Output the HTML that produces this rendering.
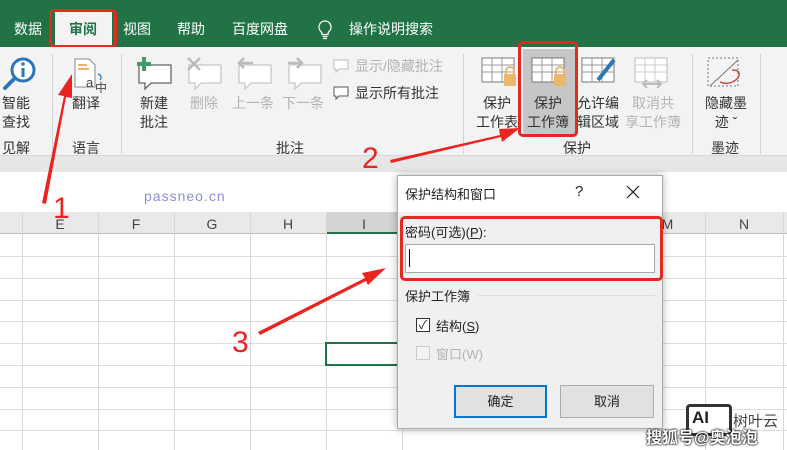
<!DOCTYPE html>
<html><head><meta charset="utf-8"><style>
*{margin:0;padding:0;box-sizing:border-box}
body{width:787px;height:450px;overflow:hidden;position:relative;background:#fff;font-family:"Liberation Sans","Noto Sans CJK SC",sans-serif;font-size:13px;color:#222}
.a{position:absolute;white-space:nowrap}
.tab{color:#fff;font-size:14px;top:19px}
.lbl{font-size:14px;color:#333;text-align:center;line-height:19px}
.dis{color:#b3b3b3}
.sep{position:absolute;top:54px;width:1px;height:100px;background:#d4d4d4}
.vl{position:absolute;top:212px;width:1px;height:238px;background:#d8d8d8}
.hl{position:absolute;left:0;width:787px;height:1px;background:#dcdcdc}
.ch{position:absolute;top:212px;height:22px;font-size:14px;color:#444;text-align:center;line-height:24px}
</style></head><body>
<div class="a" style="left:0;top:0;width:787px;height:47px;background:#217346"></div>
<div class="a" style="left:55px;top:10px;width:57px;height:37px;background:#f3f3f3"></div>
<div class="a" style="left:49px;top:9px;width:68px;height:39px;border:3px solid #e02a22;border-radius:5px"></div>
<div class="a tab" style="left:14px">数据</div>
<div class="a tab" style="left:69px;color:#217346;font-weight:bold">审阅</div>
<div class="a tab" style="left:123px">视图</div>
<div class="a tab" style="left:177px">帮助</div>
<div class="a tab" style="left:232px">百度网盘</div>
<svg class="a" style="left:317px;top:20px" width="16" height="20" viewBox="0 0 16 20"><path d="M8 1a6 6 0 0 0-4 10.5c1 1 1 2 1 3h6c0-1 0-2 1-3A6 6 0 0 0 8 1zM5.5 16.5h5M6 18.5h4" fill="none" stroke="#fff" stroke-width="1.3"/></svg>
<div class="a tab" style="left:349px">操作说明搜索</div>
<div class="a" style="left:0;top:47px;width:787px;height:108px;background:#f3f3f3"></div>
<div class="a" style="left:0;top:155px;width:787px;height:17px;background:#e6e6e6;border-top:1px solid #d8d8d8"></div>
<div class="sep" style="left:52px"></div><div class="sep" style="left:121px"></div><div class="sep" style="left:463px"></div><div class="sep" style="left:692px"></div><div class="sep" style="left:760px"></div>
<svg class="a" style="left:2px;top:56px" width="36" height="36"><circle cx="21" cy="14" r="11" fill="#fff" stroke="#2e75b6" stroke-width="3"/><rect x="19.5" y="12" width="3" height="9" fill="#2e75b6"/><circle cx="21" cy="8" r="1.8" fill="#2e75b6"/><path d="M13 22L3 32" stroke="#2e75b6" stroke-width="4" stroke-linecap="round"/></svg>
<div class="a lbl" style="left:2px;top:94px">智能<br>查找</div>
<div class="a lbl" style="left:2px;top:139px">见解</div>
<svg class="a" style="left:70px;top:57px" width="40" height="36"><path d="M5 2h14l6 6v22H5z" fill="#fff" stroke="#888"/><path d="M8 8h9M8 12h11" stroke="#e8963c" stroke-width="1.5"/><text x="16" y="30" font-size="13" fill="#444" font-family="Liberation Sans">a</text><text x="25" y="35" font-size="12" fill="#444" font-family="Noto Sans CJK SC">中</text><path d="M28 17q5 2 2 6" fill="none" stroke="#2e75b6" stroke-width="1.3"/></svg>
<div class="a lbl" style="left:72px;top:94px">翻译</div>
<div class="a lbl" style="left:72px;top:139px">语言</div>
<svg class="a" style="left:135px;top:55px" width="40" height="36"><path d="M4 10h32v18H16l-6 6v-6H4z" fill="#fff" stroke="#666" stroke-width="1.3"/><path d="M9 2v14M2 9h14" stroke="#3f9a6e" stroke-width="4"/></svg>
<div class="a lbl" style="left:140px;top:94px">新建<br>批注</div>
<svg class="a" style="left:185px;top:55px" width="40" height="36"><path d="M4 10h32v18H16l-6 6v-6H4z" fill="#fff" stroke="#c8c8c8" stroke-width="1.3"/><path d="M3 3l12 12M15 3L3 15" stroke="#bbb" stroke-width="2.5"/></svg>
<div class="a lbl dis" style="left:190px;top:94px">删除</div>
<svg class="a" style="left:235px;top:55px" width="40" height="36"><path d="M4 10h32v18H16l-6 6v-6H4z" fill="#fff" stroke="#c8c8c8" stroke-width="1.3"/><path d="M18 8H4M9 3L4 8l5 5" fill="none" stroke="#bbb" stroke-width="2.5"/></svg>
<div class="a lbl dis" style="left:232px;top:94px">上一条</div>
<svg class="a" style="left:285px;top:55px" width="40" height="36"><path d="M4 10h32v18H16l-6 6v-6H4z" fill="#fff" stroke="#c8c8c8" stroke-width="1.3"/><path d="M3 8h14M12 3l5 5-5 5" fill="none" stroke="#bbb" stroke-width="2.5"/></svg>
<div class="a lbl dis" style="left:282px;top:94px">下一条</div>
<svg class="a" style="left:333px;top:58px" width="16" height="16"><path d="M1 2h14v9H6l-3 3v-3H1z" fill="#fff" stroke="#bbb"/></svg>
<div class="a dis" style="left:355px;top:56px;font-size:14px">显示/隐藏批注</div>
<svg class="a" style="left:333px;top:85px" width="16" height="16"><path d="M1 2h14v9H6l-3 3v-3H1z" fill="#fff" stroke="#555"/></svg>
<div class="a" style="left:355px;top:83px;font-size:14px;color:#333">显示所有批注</div>
<div class="a lbl" style="left:276px;top:139px">批注</div>
<svg class="a" style="left:480px;top:56px" width="40" height="34"><rect x="2" y="2" width="32" height="24" fill="#fff" stroke="#777"/><path d="M2 9h32M2 16h32M12 2v24M22 2v24" stroke="#999"/><rect x="24" y="18" width="12" height="12" rx="1" fill="#e9b86a"/><path d="M26 18v-3a4 4 0 0 1 8 0v3" fill="none" stroke="#e9b86a" stroke-width="2"/></svg>
<div class="a lbl" style="left:476px;top:94px">保护<br>工作表</div>
<div class="a" style="left:523px;top:49px;width:52px;height:86px;background:#c6c6c6"></div>
<div class="a" style="left:518px;top:41px;width:60px;height:96px;border:3px solid #e02a22;border-radius:5px"></div>
<svg class="a" style="left:530px;top:56px" width="40" height="34"><rect x="2" y="2" width="32" height="24" fill="#fff" stroke="#777"/><path d="M2 9h32M2 16h32M12 2v24M22 2v24" stroke="#999"/><rect x="24" y="18" width="12" height="12" rx="1" fill="#e9b86a"/><path d="M26 18v-3a4 4 0 0 1 8 0v3" fill="none" stroke="#e9b86a" stroke-width="2"/></svg>
<div class="a lbl" style="left:527px;top:94px">保护<br>工作簿</div>
<svg class="a" style="left:580px;top:56px" width="40" height="34"><rect x="2" y="2" width="32" height="24" fill="#fff" stroke="#777"/><path d="M2 9h32M2 16h32M12 2v24M22 2v24" stroke="#999"/><path d="M34 4L18 24" stroke="#2e75b6" stroke-width="4"/></svg>
<div class="a lbl" style="left:577px;top:94px">允许编<br>辑区域</div>
<svg class="a" style="left:633px;top:56px" width="40" height="34"><rect x="2" y="2" width="32" height="24" fill="#fff" stroke="#bbb"/><path d="M2 9h32M2 16h32M12 2v24M22 2v24" stroke="#ccc"/><path d="M10 28h18M14 24l-4 4 4 4M24 24l4 4-4 4" fill="none" stroke="#bbb" stroke-width="2"/></svg>
<div class="a lbl dis" style="left:625px;top:94px">取消共<br>享工作簿</div>
<div class="a lbl" style="left:563px;top:139px">保护</div>
<svg class="a" style="left:706px;top:56px" width="40" height="34"><rect x="2" y="2" width="30" height="28" fill="none" stroke="#777" stroke-dasharray="2 2"/><path d="M4 30L32 4" stroke="#777"/><path d="M14 26q10 4 18-4 4-8-6-8" fill="none" stroke="#c0504d" stroke-width="1.5"/></svg>
<div class="a lbl" style="left:705px;top:94px">隐藏墨<br>迹 ˇ</div>
<div class="a lbl" style="left:711px;top:139px">墨迹</div>
<div class="a" style="left:0;top:212px;width:787px;height:22px;background:#e9e9e9;border-bottom:1px solid #bdbdbd"></div>
<div class="a" style="left:326px;top:212px;width:76px;height:22px;background:#d3d3d3;border-bottom:2px solid #217346"></div>
<div class="a" style="left:144px;top:188px;color:#8f8fd6;font-size:14px;letter-spacing:1px">passneo.cn</div>
<div class="vl" style="left:22px"></div><div class="vl" style="left:98px"></div><div class="vl" style="left:174px"></div><div class="vl" style="left:250px"></div><div class="vl" style="left:326px"></div><div class="vl" style="left:402px"></div><div class="vl" style="left:705px"></div><div class="vl" style="left:783px"></div>
<div class="ch" style="left:22px;width:76px">E</div><div class="ch" style="left:98px;width:76px">F</div><div class="ch" style="left:174px;width:76px">G</div><div class="ch" style="left:250px;width:76px">H</div><div class="ch" style="left:326px;width:76px">I</div><div class="ch" style="left:630px;width:75px">M</div><div class="ch" style="left:705px;width:78px">N</div>
<div class="hl" style="top:256px"></div><div class="hl" style="top:278px"></div><div class="hl" style="top:300px"></div><div class="hl" style="top:321px"></div><div class="hl" style="top:343px"></div><div class="hl" style="top:365px"></div><div class="hl" style="top:387px"></div><div class="hl" style="top:409px"></div><div class="hl" style="top:430px"></div>
<div class="a" style="left:325px;top:342px;width:78px;height:24px;border:2px solid #217346"></div>
<div class="a" style="left:397px;top:175px;width:266px;height:254px;background:#f0f0f0;border:1px solid #aaa;box-shadow:0 0 8px rgba(0,0,0,.3)"></div>
<div class="a" style="left:398px;top:176px;width:264px;height:36px;background:#fff"></div>
<div class="a" style="left:405px;top:184px;font-size:13px">保护结构和窗口</div>
<div class="a" style="left:575px;top:183px;font-size:15px">?</div>
<svg class="a" style="left:626px;top:185px" width="14" height="14"><path d="M1 1l12 12M13 1L1 13" stroke="#222" stroke-width="1.2"/></svg>
<div class="a" style="left:405px;top:222px;font-size:13px">密码(可选)(<u>P</u>):</div>
<div class="a" style="left:405px;top:244px;width:250px;height:29px;background:#fff;border:1px solid #aaa"></div>
<div class="a" style="left:409px;top:249px;width:1px;height:18px;background:#000"></div>
<div class="a" style="left:400px;top:216px;width:263px;height:65px;border:3px solid #e02a22;border-radius:5px"></div>
<div class="a" style="left:405px;top:286px;font-size:13px">保护工作簿</div>
<div class="a" style="left:478px;top:295px;width:177px;height:1px;background:#ddd"></div>
<div class="a" style="left:416px;top:318px;width:14px;height:14px;border:1px solid #333;background:#fff;font-size:12px;line-height:12px;text-align:center">✓</div>
<div class="a" style="left:436px;top:316px;font-size:13px">结构(<u>S</u>)</div>
<div class="a" style="left:416px;top:346px;width:14px;height:14px;border:1px solid #ccc;background:#f4f4f4"></div>
<div class="a dis" style="left:436px;top:344px;font-size:13px">窗口(W)</div>
<div class="a" style="left:454px;top:385px;width:93px;height:33px;background:#e1e1e1;border:2px solid #0078d7;text-align:center;line-height:29px">确定</div>
<div class="a" style="left:560px;top:385px;width:94px;height:33px;background:#e1e1e1;border:1px solid #adadad;text-align:center;line-height:31px">取消</div>
<div class="a" style="left:686px;top:404px;width:46px;height:32px;border:3px solid #333;border-radius:4px;background:#fff;font-weight:bold;font-size:17px;padding-left:3px;line-height:22px">AI</div>
<div class="a" style="left:733px;top:410px;font-size:15px;color:#444">树叶云</div>
<div class="a" style="left:646px;top:424px;font-size:16px;color:#fff;font-weight:bold;text-shadow:0 0 2px #000,0 0 2px #000">搜狐号@奥泡泡</div>
<svg class="a" style="left:0;top:0" width="787" height="450">
<g fill="#e8261f">
<path d="M42 203L64 96 58 95 72 74 72 98 66 97 46 204z"/>
<path d="M390 160L500 135 499 129 520 128 502 142 501 137 391 163z"/>
<path d="M258 332L365 278 362 273 386 268 368 285 366 281 260 335z"/>
</g>
<g fill="#e8261f" font-family="Liberation Sans" font-size="30">
<text x="53" y="218">1</text><text x="362" y="168">2</text><text x="232" y="352">3</text>
</g></svg>
</body></html>
